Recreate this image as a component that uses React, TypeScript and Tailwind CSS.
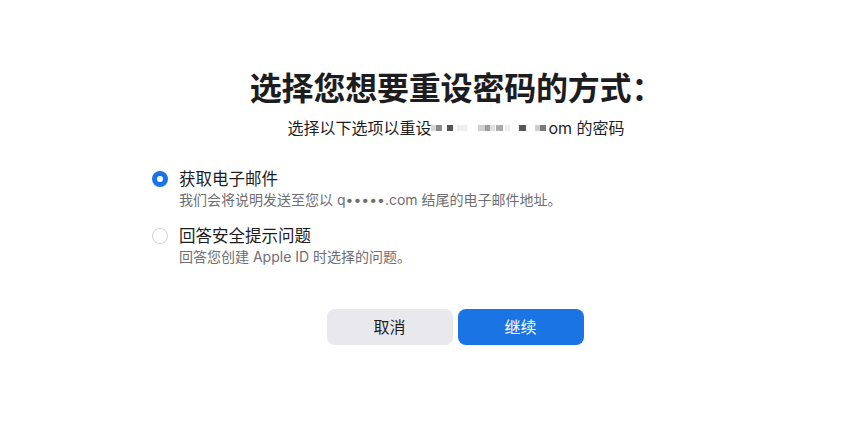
import { useState } from "react";

const font = {
    fontFamily: '"PingFang SC", Inter, "Noto Sans CJK SC", sans-serif',
};

// pixelated blocks covering the redacted email
const blocks: { w: number; c: string; ml?: number }[] = [
    { w: 5, c: "#d6d6d6" },
    { w: 6, c: "#8a8a8a" },
    { w: 6, c: "#555555", ml: 5 },
    { w: 10, c: "#efefef", ml: 4 },
    { w: 7, c: "#cfcfcf", ml: 11 },
    { w: 5, c: "#9d9d9d" },
    { w: 5, c: "#e0e0e0" },
    { w: 7, c: "#aaaaaa", ml: 1 },
    { w: 5, c: "#ededed", ml: 2 },
    { w: 7, c: "#565656", ml: 9 },
    { w: 5, c: "#cdcdcd", ml: 9 },
    { w: 6, c: "#7a7a7a" },
];

function Radio({ checked }: { checked: boolean }) {
    return checked ? (
        <span className="flex h-4 w-4 shrink-0 items-center justify-center rounded-full bg-[#1a73e8]">
            <span className="h-[6px] w-[6px] rounded-full bg-white" />
        </span>
    ) : (
        <span className="h-4 w-4 shrink-0 rounded-full border border-[#d2d2d7] bg-white" />
    );
}

export default function App() {
    const [choice, setChoice] = useState<"email" | "question">("email");

    return (
        <div className="h-[424px] w-[850px] bg-white text-[#1d1d1f]" style={font}>
            <div className="ml-[152px] flex w-[600px] flex-col pt-[69px]">
                {/* Header */}
                <h1 className="pl-[9px] text-center text-[32px] font-semibold leading-[40px] tracking-[-0.2px]">
                    选择您想要重设密码的方式：
                </h1>
                <p className="mt-[9px] flex items-center justify-center pl-[8px] text-[16px] leading-[20px]">
                    <span>选择以下选项以重设</span>
                    <span className="flex items-center">
                        {blocks.map((b, i) => (
                            <span
                                key={i}
                                className="inline-block h-[6px]"
                                style={{ width: b.w, background: b.c, marginLeft: b.ml ?? 0 }}
                            />
                        ))}
                    </span>
                    <span className="ml-[2px]">om 的密码</span>
                </p>

                {/* Options */}
                <div className="mt-[30px] flex flex-col gap-[15px]">
                    <button
                        className="flex flex-col items-start text-left"
                        onClick={() => setChoice("email")}
                    >
                        <span className="flex items-center gap-[11px]">
                            <Radio checked={choice === "email"} />
                            <span className="text-[16.5px] leading-[22px]">获取电子邮件</span>
                        </span>
                        <span className="ml-[27px] text-[14px] leading-[20px] text-[#6e6e73]">
                            我们会将说明发送至您以 q•••••.com 结尾的电子邮件地址。
                        </span>
                    </button>
                    <button
                        className="flex flex-col items-start text-left"
                        onClick={() => setChoice("question")}
                    >
                        <span className="flex items-center gap-[11px]">
                            <Radio checked={choice === "question"} />
                            <span className="text-[16.5px] leading-[22px]">回答安全提示问题</span>
                        </span>
                        <span className="ml-[27px] text-[14px] leading-[20px] text-[#6e6e73]">
                            回答您创建 Apple ID 时选择的问题。
                        </span>
                    </button>
                </div>

                {/* Actions */}
                <div className="mt-[42px] flex justify-center gap-[5px] pl-[6px]">
                    <button className="h-9 w-[126px] rounded-lg bg-[#e8e8ed] text-[16px] text-[#1d1d1f]">
                        取消
                    </button>
                    <button className="h-9 w-[126px] rounded-lg bg-[#1b74e4] text-[16px] text-white">
                        继续
                    </button>
                </div>
            </div>
        </div>
    );
}
